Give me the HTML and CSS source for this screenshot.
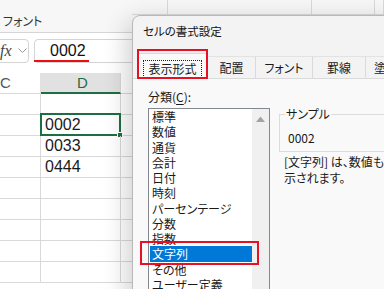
FILE: index.html
```html
<!DOCTYPE html>
<html lang="ja">
<head>
    <meta charset="UTF-8">
    <link rel="stylesheet" href="styles.css">
    <title>セルの書式設定</title>
</head>
<body>
    <div class="excel">
        <div class="ribbon">
            <span class="group-label">フォント</span>
            <div class="ribbon-cells">
                <span class="rc" style="width:36px"></span>
                <span class="rc" style="width:144px"></span>
                <span class="rc" style="width:63px"></span>
                <span class="rc" style="width:9px"></span>
            </div>
        </div>

        <div class="formula-bar">
            <div class="fx-box">
                <span class="fx">fx</span>
                <svg class="chev" width="9" height="6" viewBox="0 0 9 6"><path d="M0.5 0.5 L4.5 4.5 L8.5 0.5" fill="none" stroke="#9a9a9a" stroke-width="1"/></svg>
            </div>
            <div class="formula-input">
                <span class="formula-text">0002</span>
            </div>
        </div>

        <div class="sheet">
            <div class="row header">
                <div class="cell col-c">C</div>
                <div class="cell col-d">D</div>
                <div class="cell col-e"></div>
            </div>
            <div class="row">
                <div class="cell col-c"></div>
                <div class="cell col-d"></div>
                <div class="cell col-e"></div>
            </div>
            <div class="row">
                <div class="cell col-c"></div>
                <div class="cell col-d active">0002<span class="sel"><span class="handle"></span></span></div>
                <div class="cell col-e"></div>
            </div>
            <div class="row">
                <div class="cell col-c"></div>
                <div class="cell col-d">0033</div>
                <div class="cell col-e"></div>
            </div>
            <div class="row">
                <div class="cell col-c"></div>
                <div class="cell col-d">0444</div>
                <div class="cell col-e"></div>
            </div>
            <div class="row">
                <div class="cell col-c"></div>
                <div class="cell col-d"></div>
                <div class="cell col-e"></div>
            </div>
            <div class="row">
                <div class="cell col-c"></div>
                <div class="cell col-d"></div>
                <div class="cell col-e"></div>
            </div>
            <div class="row">
                <div class="cell col-c"></div>
                <div class="cell col-d"></div>
                <div class="cell col-e"></div>
            </div>
            <div class="row">
                <div class="cell col-c"></div>
                <div class="cell col-d"></div>
                <div class="cell col-e"></div>
            </div>
            <div class="row">
                <div class="cell col-c"></div>
                <div class="cell col-d"></div>
                <div class="cell col-e"></div>
            </div>
        </div>
    </div>

    <!-- format cells dialog -->
    <div class="dialog">
        <div class="dialog-title">セルの書式設定</div>
        <div class="tabs">
            <div class="tab selected"><span class="focus">表示形式</span><span class="mark"></span></div>
            <div class="tab" style="width:48px">配置</div>
            <div class="tab" style="width:57px">フォント</div>
            <div class="tab" style="width:53px">罫線</div>
            <div class="tab" style="width:72px">塗りつぶし</div>
        </div>
        <div class="panel">
            <div class="left">
                <div class="label">分類(<u>C</u>):</div>
                <div class="listbox">
                    <ul class="items">
                        <li>標準</li>
                        <li>数値</li>
                        <li>通貨</li>
                        <li>会計</li>
                        <li>日付</li>
                        <li>時刻</li>
                        <li>パーセンテージ</li>
                        <li>分数</li>
                        <li>指数</li>
                        <li class="chosen">文字列<span class="mark"></span></li>
                        <li>その他</li>
                        <li>ユーザー定義</li>
                    </ul>
                    <div class="scrollbar">
                        <svg width="9" height="6" viewBox="0 0 9 6"><path d="M0 6 L4.5 0.5 L9 6 Z" fill="#a3a3a3"/></svg>
                    </div>
                </div>
            </div>
            <div class="right">
                <fieldset class="sample">
                    <legend>サンプル</legend>
                    <div class="sample-value">0002</div>
                </fieldset>
                <p class="desc">[文字列] は、数値も文字列として扱います。入力したとおりにセルに表<br>示されます。</p>
            </div>
        </div>
    </div>
</body>
</html>
```

FILE: styles.css
```css
* {
    box-sizing: border-box;
}

body {
    margin: 0;
    width: 384px;
    height: 289px;
    overflow: hidden;
    position: relative;
    background: #fff;
    font-family: "Noto Sans CJK JP", sans-serif;
    font-feature-settings: "palt";
    color: #1a1a1a;
    font-size: 12px;
}

/* excel behind */
.ribbon {
    height: 33px;
    display: flex;
    align-items: flex-start;
    background: #f7f7f7;
    border-bottom: 1px solid #d6d6d6;
}

.group-label {
    padding: 13px 0 0 3px;
    line-height: 16px;
    font-size: 12px;
    color: #333;
}

.ribbon-cells {
    margin-left: auto;
    width: 252px;
    height: 15px;
    display: flex;
    border-bottom: 1px solid #dadada;
}

.rc {
    height: 14px;
    border-right: 1px solid #dadada;
}

.formula-bar {
    height: 40px;
    display: flex;
    align-items: flex-start;
    padding-top: 6px;
}

.fx-box {
    margin-left: -6px;
    width: 35px;
    height: 24px;
    border: 1px solid #d4d4d4;
    border-radius: 4px;
    display: flex;
    align-items: center;
    padding-left: 5px;
    gap: 6px;
}

.fx {
    font-family: "Liberation Serif", serif;
    font-style: italic;
    font-size: 16px;
    color: #444;
}

.formula-input {
    margin-left: 5px;
    width: 120px;
    height: 24px;
    border: 1px solid #d4d4d4;
    border-radius: 4px;
    padding-left: 15px;
    position: relative;
}

.formula-text {
    font-family: "Liberation Sans", sans-serif;
    font-size: 16px;
    line-height: 22px;
    color: #111;
}

.formula-input::after {
    content: "";
    position: absolute;
    left: -1px;
    top: 20px;
    width: 55px;
    height: 2px;
    background: #e81010;
}

.row {
    display: flex;
    height: 21px;
}

.cell {
    height: 21px;
    border-bottom: 1px solid #d9d9d9;
    border-right: 1px solid #d9d9d9;
    font-family: "Liberation Sans", sans-serif;
    font-size: 16px;
    line-height: 20px;
    padding-left: 4px;
}

.col-c {
    width: 41px;
}

.col-d {
    width: 80px;
    position: relative;
}

.col-e {
    flex: 1;
}

.header .cell {
    font-family: "Liberation Sans", sans-serif;
    font-size: 15px;
    background: #fff;
    text-align: center;
    color: #555;
}

.header .col-c {
    text-align: left;
    padding-left: 0;
    border-right: 1px solid #e0e0e0;
}

.header .col-d {
    background: #e1e1e1;
    color: #1e6e43;
    border-bottom: 2px solid #1e6e43;
    line-height: 19px;
}

.sel {
    position: absolute;
    top: -2px;
    left: -1px;
    right: -1px;
    bottom: -1px;
    border: 2px solid #1e6e43;
}

.handle {
    position: absolute;
    right: -4px;
    bottom: -4px;
    width: 6px;
    height: 6px;
    background: #1e6e43;
    border: 1px solid #fff;
}

/* dialog */
.dialog {
    position: absolute;
    left: 132px;
    top: 15px;
    width: 270px;
    height: 290px;
    background: #f3f3f3;
    border: 1px solid #b8b8b8;
    border-radius: 8px 0 0 0;
    box-shadow: -4px 6px 26px rgba(0, 0, 0, 0.2);
}

.dialog-title {
    height: 32px;
    padding: 7px 0 0 10px;
    line-height: 16px;
    font-size: 11.5px;
    color: #111;
}

.tabs {
    height: 30px;
    display: flex;
    align-items: flex-end;
    padding-left: 4px;
    position: relative;
    z-index: 1;
}

.tab {
    flex-shrink: 0;
    height: 22px;
    border-right: 1px solid #dadada;
    border-top: 1px solid #e2e2e2;
    text-align: center;
    line-height: 21px;
    font-size: 12px;
    white-space: nowrap;
    overflow: hidden;
    background: #f3f3f3;
}

.tab.selected {
    width: 71px;
    height: 26px;
    margin-bottom: -1px;
    background: #f9f9f9;
    border: 1px solid #dadada;
    border-bottom: none;
    position: relative;
    overflow: visible;
    padding-top: 4px;
}

.focus {
    display: inline-block;
    width: 59px;
    height: 18px;
    line-height: 16px;
    border: 1px dotted #222;
}

.mark {
    position: absolute;
    border: 2px solid #e81123;
    pointer-events: none;
}

.tab .mark {
    left: -1px;
    right: -1px;
    top: -5px;
    bottom: 0;
}

.panel {
    height: 230px;
    background: #f9f9f9;
    border-top: 1px solid #dadada;
    display: flex;
    gap: 9px;
    padding: 10px 0 0 15px;
}

.label {
    line-height: 16px;
    margin-bottom: 3px;
}

.label u {
    text-underline-offset: 2px;
}

.listbox {
    width: 122px;
    height: 200px;
    background: #fff;
    border: 1px solid #828790;
    display: flex;
}

.items {
    list-style: none;
    margin: 0;
    padding: 0;
    flex: 1;
    position: relative;
    z-index: 2;
}

.items li {
    height: 15.25px;
    line-height: 15.25px;
    padding-left: 2px;
    margin-left: 1px;
    white-space: nowrap;
}

.items li.chosen {
    background: #0078d7;
    color: #fff;
    position: relative;
}

.items .mark {
    left: -10px;
    right: -7px;
    top: -5px;
    bottom: -3px;
}

.scrollbar {
    width: 17px;
    background: #f0f0f0;
    display: flex;
    justify-content: center;
    padding-top: 7px;
}

.right {
    padding-top: 17px;
    flex: 1;
}

.sample {
    margin: 0;
    padding: 0 0 4px 5px;
    border: 1px solid #dcdcdc;
    height: 46px;
}

.sample legend {
    padding: 0 1px;
    line-height: 16px;
}

.sample-value {
    margin: 8px 0 0 3px;
    line-height: 16px;
}

.desc {
    margin: 2px 0 0 5px;
    line-height: 16px;
    white-space: nowrap;
}
```
